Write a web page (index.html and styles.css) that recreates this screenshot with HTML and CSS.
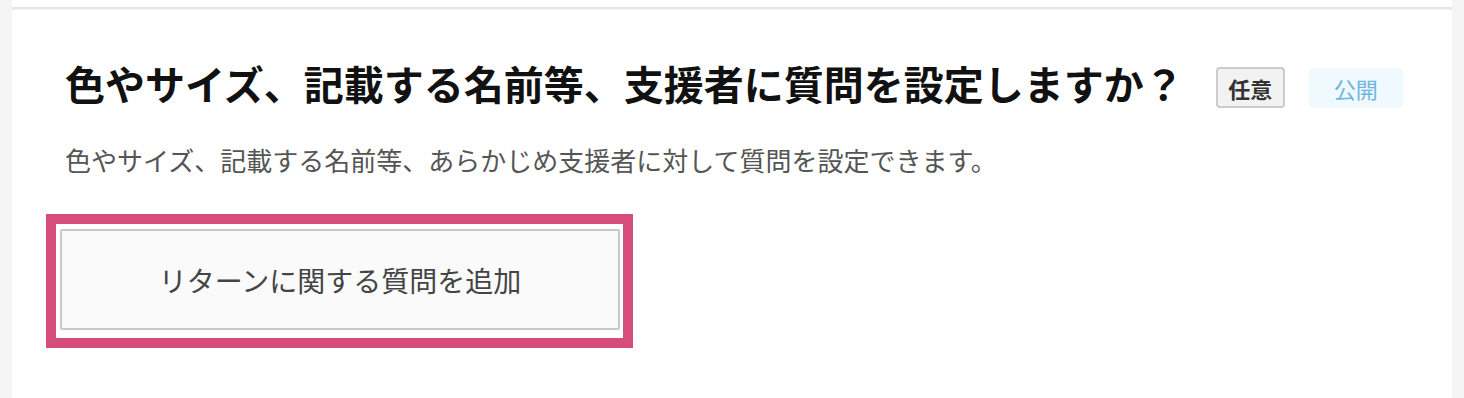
FILE: index.html
```html
<!DOCTYPE html>
<html lang="ja">
<head>
<meta charset="utf-8">
<title>質問設定</title>
<link rel="stylesheet" href="styles.css">
</head>
<body>
<div class="page">
  <div class="prev-card"></div>
  <section class="card">
    <div class="head">
      <h2 class="title">色やサイズ、記載する名前等、支援者に質問を設定しますか？</h2>
      <span class="badge badge-optional">任意</span>
      <span class="badge badge-public">公開</span>
    </div>
    <p class="desc">色やサイズ、記載する名前等、あらかじめ支援者に対して質問を設定できます。</p>
    <div class="highlight">
      <button class="add-btn" type="button">リターンに関する質問を追加</button>
    </div>
  </section>
</div>
</body>
</html>
```

FILE: styles.css
```css
html, body {
  margin: 0;
  padding: 0;
  background: #f5f5f5;
  font-family: "Noto Sans CJK JP", "Noto Sans", sans-serif;
  height: 398px;
  overflow: hidden;
}
.page {
  padding: 0 12px;
}
.prev-card {
  height: 7px;
  background: #fff;
  border-bottom: 2px solid #e4e4e4;
}
.card {
  margin-top: 1px;
  background: #fff;
  border-radius: 4px 4px 0 0;
  height: 400px;
  padding: 53px 48px 0 34px;
  box-sizing: border-box;
}
.head {
  display: flex;
  align-items: flex-start;
  padding-left: 19px;
}
.title {
  margin: 0;
  font-size: 40px;
  line-height: 40px;
  font-weight: 700;
  color: #111;
  white-space: nowrap;
}
.badge {
  display: inline-flex;
  align-items: center;
  justify-content: center;
  box-sizing: border-box;
  font-size: 22px;
  line-height: 22px;
  border-radius: 4px;
}
.badge-optional {
  margin-left: 32px;
  margin-top: 4px;
  width: 69px;
  height: 41px;
  background: #f2f2f2;
  border: 2px solid #cbcbcb;
  color: #333;
  font-weight: 700;
}
.badge-public {
  margin-left: 24px;
  margin-top: 5px;
  width: 94px;
  height: 40px;
  background: #f0f9fe;
  color: #6cb6e0;
  font-weight: 400;
}
.desc {
  margin: 39px 0 0;
  padding-left: 19px;
  font-size: 26px;
  line-height: 26px;
  color: #555;
}
.highlight {
  margin-top: 41px;
  width: 587px;
  height: 134px;
  box-sizing: border-box;
  border: 10px solid #d64d7b;
  padding: 5px 4px 7px 4px;
  background: #fff;
}
.add-btn {
  display: block;
  width: 560px;
  height: 101px;
  box-sizing: border-box;
  border: 2px solid #c8c8c8;
  border-radius: 2px;
  background: #fafafa;
  color: #444;
  font-family: "Noto Sans CJK JP", "Noto Sans", sans-serif;
  font-size: 28px;
  line-height: 28px;
  padding: 0;
  cursor: pointer;
}
```
